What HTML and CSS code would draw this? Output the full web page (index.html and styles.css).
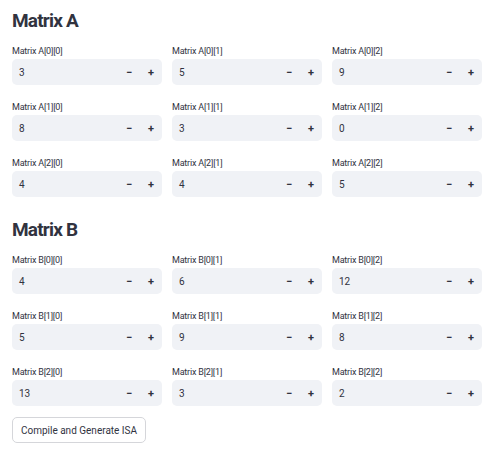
FILE: index.html
```html
<!DOCTYPE html>
<html>
<head>
<meta charset="utf-8">
<link rel="stylesheet" href="styles.css">
</head>
<body>
<div class="page">
  <h2 class="title">Matrix A</h2>
  <div class="grid">
    <div class="field"><div class="label">Matrix A[0][0]</div><div class="input"><span class="value">3</span><span class="step">−</span><span class="step">+</span></div></div>
    <div class="field"><div class="label">Matrix A[0][1]</div><div class="input"><span class="value">5</span><span class="step">−</span><span class="step">+</span></div></div>
    <div class="field"><div class="label">Matrix A[0][2]</div><div class="input"><span class="value">9</span><span class="step">−</span><span class="step">+</span></div></div>
    <div class="field"><div class="label">Matrix A[1][0]</div><div class="input"><span class="value">8</span><span class="step">−</span><span class="step">+</span></div></div>
    <div class="field"><div class="label">Matrix A[1][1]</div><div class="input"><span class="value">3</span><span class="step">−</span><span class="step">+</span></div></div>
    <div class="field"><div class="label">Matrix A[1][2]</div><div class="input"><span class="value">0</span><span class="step">−</span><span class="step">+</span></div></div>
    <div class="field"><div class="label">Matrix A[2][0]</div><div class="input"><span class="value">4</span><span class="step">−</span><span class="step">+</span></div></div>
    <div class="field"><div class="label">Matrix A[2][1]</div><div class="input"><span class="value">4</span><span class="step">−</span><span class="step">+</span></div></div>
    <div class="field"><div class="label">Matrix A[2][2]</div><div class="input"><span class="value">5</span><span class="step">−</span><span class="step">+</span></div></div>
  </div>
  <h2 class="title second">Matrix B</h2>
  <div class="grid">
    <div class="field"><div class="label">Matrix B[0][0]</div><div class="input"><span class="value">4</span><span class="step">−</span><span class="step">+</span></div></div>
    <div class="field"><div class="label">Matrix B[0][1]</div><div class="input"><span class="value">6</span><span class="step">−</span><span class="step">+</span></div></div>
    <div class="field"><div class="label">Matrix B[0][2]</div><div class="input"><span class="value">12</span><span class="step">−</span><span class="step">+</span></div></div>
    <div class="field"><div class="label">Matrix B[1][0]</div><div class="input"><span class="value">5</span><span class="step">−</span><span class="step">+</span></div></div>
    <div class="field"><div class="label">Matrix B[1][1]</div><div class="input"><span class="value">9</span><span class="step">−</span><span class="step">+</span></div></div>
    <div class="field"><div class="label">Matrix B[1][2]</div><div class="input"><span class="value">8</span><span class="step">−</span><span class="step">+</span></div></div>
    <div class="field"><div class="label">Matrix B[2][0]</div><div class="input"><span class="value">13</span><span class="step">−</span><span class="step">+</span></div></div>
    <div class="field"><div class="label">Matrix B[2][1]</div><div class="input"><span class="value">3</span><span class="step">−</span><span class="step">+</span></div></div>
    <div class="field"><div class="label">Matrix B[2][2]</div><div class="input"><span class="value">2</span><span class="step">−</span><span class="step">+</span></div></div>
  </div>
  <button class="btn">Compile and Generate ISA</button>
</div>
</body>
</html>
```

FILE: styles.css
```css
html, body {
  margin: 0;
  padding: 0;
  background: #ffffff;
}
body {
  font-family: Roboto, "Open Sans", sans-serif;
  color: #31333f;
}
.page {
  width: 470px;
  padding: 8px 0 0 12px;
}
.title {
  margin: 0 0 11px 0;
  font-size: 19px;
  font-weight: 700;
  line-height: 26px;
  letter-spacing: -0.8px;
}
.title.second {
  margin-top: 20px;
}
.grid {
  display: grid;
  grid-template-columns: repeat(3, 150px);
  column-gap: 10px;
  row-gap: 16px;
}
.label {
  font-size: 9px;
  line-height: 12px;
  height: 12px;
  margin-bottom: 2px;
  letter-spacing: -0.2px;
}
.input {
  display: flex;
  align-items: center;
  height: 26px;
  background: #f0f2f6;
  border-radius: 5px;
  font-size: 10px;
}
.value {
  flex: 1;
  padding-left: 7px;
}
.step {
  width: 22px;
  text-align: center;
  font-size: 11px;
  font-weight: 700;
}
.btn {
  display: block;
  margin-top: 11px;
  height: 26px;
  width: 134px;
  padding: 0;
  font-family: Roboto, "Open Sans", sans-serif;
  font-size: 10px;
  color: #31333f;
  background: #ffffff;
  border: 1px solid #d5d6da;
  border-radius: 5px;
}
```
